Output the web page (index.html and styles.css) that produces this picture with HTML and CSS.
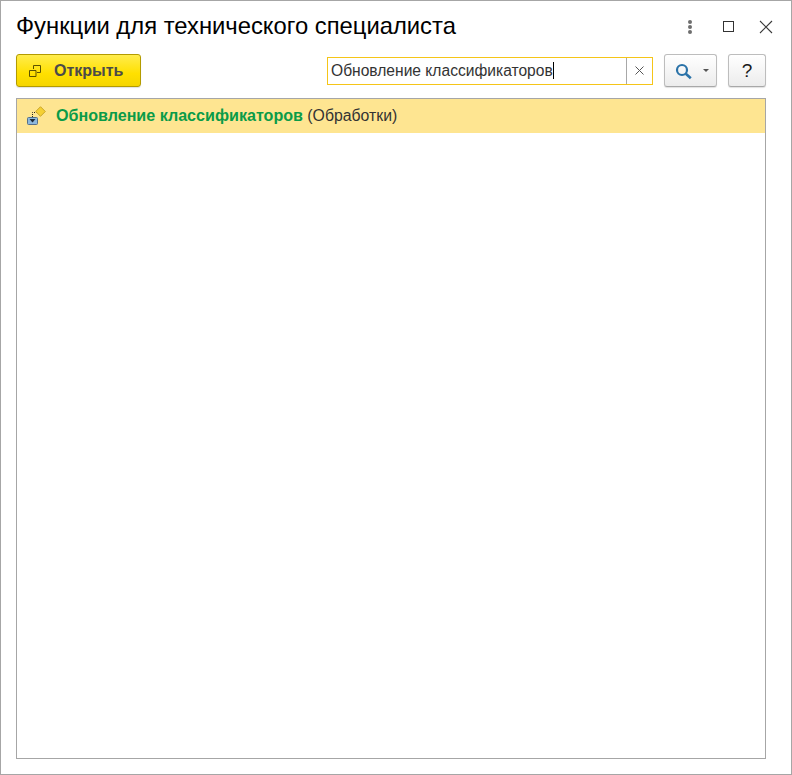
FILE: index.html
```html
<!DOCTYPE html>
<html lang="ru">
<head>
<meta charset="utf-8">
<title>Функции для технического специалиста</title>
<link rel="stylesheet" href="styles.css">
</head>
<body>
<div class="window">
  <header class="titlebar">
    <h1 class="title">Функции для технического специалиста</h1>
    <div class="window-actions">
      <span class="dots"><i></i><i></i><i></i></span>
      <span class="maximize"></span>
      <svg class="close" width="14" height="14" viewBox="0 0 14 14"><path d="M1 1L13 13M13 1L1 13" stroke="#3a3a3a" stroke-width="1.1" fill="none"/></svg>
    </div>
  </header>
  <div class="toolbar">
    <button class="btn btn-primary">
      <svg class="open-icon" width="12" height="12" viewBox="0 0 12 12"><path d="M4.500 4V.5H11.500V7.500H8M.5 5.500H7V11.500H.5Z" stroke="#5c5200" fill="none"/></svg>
      <span>Открыть</span>
    </button>
    <div class="search">
      <div class="search-input"><span class="search-text">Обновление классификаторов</span><span class="caret"></span></div>
      <span class="search-clear"><svg width="9" height="9" viewBox="0 0 9 9"><path d="M.5 .5L8.500 8.500M8.500 .5L.5 8.500" stroke="#555" fill="none"/></svg></span>
    </div>
    <button class="btn btn-search">
      <svg class="search-icon" width="18" height="18" viewBox="0 0 18 18"><circle cx="7" cy="7" r="5" stroke="#2a72a8" stroke-width="2.200" fill="none"/><path d="M10.800 10.800L15.800 15.300" stroke="#2a72a8" stroke-width="2.600" fill="none"/></svg>
      <span class="arrow"></span>
    </button>
    <button class="btn btn-help">?</button>
  </div>
  <div class="list">
    <div class="row">
      <svg class="row-icon" width="19" height="19" viewBox="0 0 19 19">
        <rect x=".5" y="11.500" width="10" height="7" rx="1" fill="#8db8dc" stroke="#55708a"/>
        <path d="M2.500 13H8.500L5.500 16.500Z" fill="#1c2a38"/>
        <path d="M5.500 11V6.500H10" stroke="#222" stroke-dasharray="1 1" fill="none"/>
        <path d="M13.500 .7L18.300 5.500L13.500 10.300L8.700 5.500Z" fill="#f5d033" stroke="#c9a52a"/>
      </svg>
      <span class="row-text"><b class="row-name">Обновление классификаторов</b> (Обработки)</span>
    </div>
  </div>
</div>
</body>
</html>
```

FILE: styles.css
```css
* { box-sizing: border-box; }
html, body { margin: 0; height: 100%; background: #fff; }
.window {
  width: 792px;
  height: 775px;
  border: 1px solid #a6a6a6;
  background: #fff;
  display: flex;
  flex-direction: column;
  padding: 0 25px 15px 15px;
  font-family: "Liberation Sans", Arial, sans-serif;
}
.titlebar { height: 53px; display: flex; align-items: center; justify-content: space-between; flex: none; }
.title { margin: 0 0 3px; font-size: 23.8px; font-weight: 400; color: #000; line-height: 26px; }
.window-actions { display: flex; align-items: center; margin: 0 -7px 2px 0; }
.dots { display: flex; flex-direction: column; gap: 1px; margin-right: 31px; }
.dots i { width: 4px; height: 4px; border-radius: 50%; background: #6e6e6e; display: block; }
.maximize { width: 11px; height: 11px; border: 1px solid #333; margin-right: 25px; }
.close { display: block; }
.toolbar { height: 33px; display: flex; align-items: center; flex: none; }
.btn {
  height: 33px;
  border-radius: 3px;
  border: 1px solid #bdbdbd;
  border-bottom-color: #a8a8a8;
  background: linear-gradient(#fff, #ececec);
  box-shadow: 0 1px 1px rgba(0,0,0,.12);
  font-family: inherit;
  padding: 0;
  display: flex;
  align-items: center;
  flex: none;
}
.btn-primary {
  width: 125px;
  border-color: #b39b00;
  background: linear-gradient(#ffec4d, #ffe000 60%, #f5d500);
  color: #4a4a4a;
  font-size: 16px;
  font-weight: 700;
  padding-left: 12px;
  gap: 13px;
}
.search { width: 326px; height: 28px; margin-left: 186px; border: 1px solid #f5c518; display: flex; flex: none; background: #fff; }
.search-input { flex: 1; display: flex; align-items: center; padding-left: 3px; font-size: 15.6px; color: #333; }
.caret { width: 1px; height: 17px; background: #000; margin-left: 0; }
.search-clear { width: 26px; border-left: 1px solid #a8a8a8; display: flex; align-items: center; justify-content: center; }
.btn-search { width: 53px; margin-left: 11px; padding-left: 10px; }
.search-icon { display: block; margin-top: 2px; }
.arrow { width: 0; height: 0; margin-left: 10px; border: 3px solid transparent; border-top: 3px solid #555; border-bottom: 0; }
.btn-help { width: 38px; margin-left: 11px; justify-content: center; font-size: 19px; color: #1a1a1a; }
.list { flex: 1; margin-top: 11px; border: 1px solid #a6a6a6; background: #fff; }
.row { height: 34px; background: #fee591; display: flex; align-items: center; padding-left: 10px; }
.row-icon { display: block; margin-right: 10px; margin-top: -1px; }
.row-text { font-size: 15.8px; color: #333; margin-bottom: 2px; }
.row-name { color: #0a9b48; font-weight: 700; font-size: 16.1px; }
```
